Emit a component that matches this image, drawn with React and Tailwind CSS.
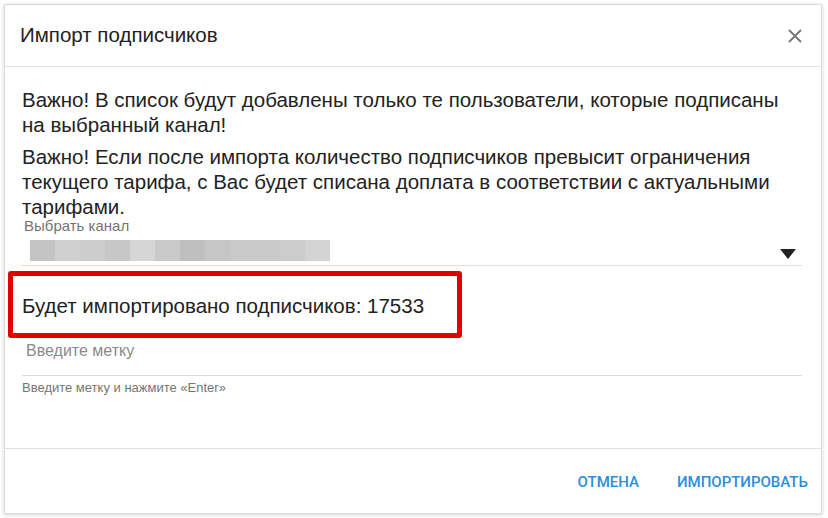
import React from "react";

const blocks = ["#c4c4c4", "#cfcfcf", "#cdcdcd", "#c7c7c7", "#d6d6d6", "#c9c9c9", "#bfbfbf", "#c6c6c6", "#c9c9c9", "#c9c9c9", "#cccccc", "#d4d4d4"];

export default function App() {
  return (
    <div className="w-[828px] h-[518px] bg-white p-[4px] overflow-hidden" style={{ fontFamily: '"Liberation Sans", Arial, sans-serif' }}>
      <div className="w-[818px] h-[510px] bg-white border border-[#dcdcdc] shadow-[0_1px_4px_rgba(0,0,0,0.18)] flex flex-col">
        <div className="h-[62px] shrink-0 flex items-center justify-between pl-[15px] pr-[18px] border-b border-[#e0e0e0]">
          <span className="text-[20.5px] text-[#222]">Импорт подписчиков</span>
          <svg width="16" height="16" viewBox="0 0 16 16" className="text-[#757575]">
            <path d="M2 2 L14 14 M14 2 L2 14" stroke="currentColor" strokeWidth="1.8" fill="none" />
          </svg>
        </div>
        <div className="flex-1 flex flex-col pl-[17px] pr-[19px] pt-[20px] text-[#222]">
          <p className="text-[20.5px] leading-[25px]">Важно! В список будут добавлены только те пользователи, которые подписаны на выбранный канал!</p>
          <p className="text-[20.5px] leading-[25px] mt-[7px]">Важно! Если после импорта количество подписчиков превысит ограничения текущего тарифа, с Вас будет списана доплата в соответствии с актуальными тарифами.</p>
          <div>
            <div className="text-[15px] leading-[16px] text-[#757575] mt-[-1px] pl-[2px]">Выбрать канал</div>
            <div className="flex items-center justify-between h-[32px] border-b border-[#e0e0e0]">
              <div className="flex h-[21px] mt-[2px] ml-[8px]">
                {blocks.map((c, i) => (
                  <div key={i} className="w-[25px] h-[21px]" style={{ background: c }} />
                ))}
              </div>
              <svg width="16" height="10" viewBox="0 0 16 10" className="mr-[6px] mt-[8px]">
                <path d="M0 0 L16 0 L8 10 Z" fill="#222" />
              </svg>
            </div>
          </div>
          <div className="ml-[-14px] mt-[5px] w-[454px] h-[67px] border-[5px] border-[#e20000] rounded-[3px] flex items-center pl-[9px]">
            <span className="text-[20.5px] text-[#222] mt-[4px]">Будет импортировано подписчиков: 17533</span>
          </div>
          <div>
            <div className="text-[16px] text-[#8a8a8a] leading-[18px] mt-[4px] pl-[4px]">Введите метку</div>
            <div className="h-[16px] border-b border-[#dcdcdc]"></div>
            <div className="text-[13px] text-[#757575] mt-[4px] leading-[15px]">Введите метку и нажмите «Enter»</div>
          </div>
        </div>
        <div className="h-[65px] shrink-0 border-t border-[#e0e0e0] flex items-center justify-end gap-[38px] pr-[13px]" style={{ fontFamily: 'Roboto, "Liberation Sans", sans-serif' }}>
          <span className="text-[15px] font-medium text-[#2a8ee0] mt-[2px]">ОТМЕНА</span>
          <span className="text-[15px] font-medium text-[#2a8ee0] mt-[2px]">ИМПОРТИРОВАТЬ</span>
        </div>
      </div>
    </div>
  );
}
